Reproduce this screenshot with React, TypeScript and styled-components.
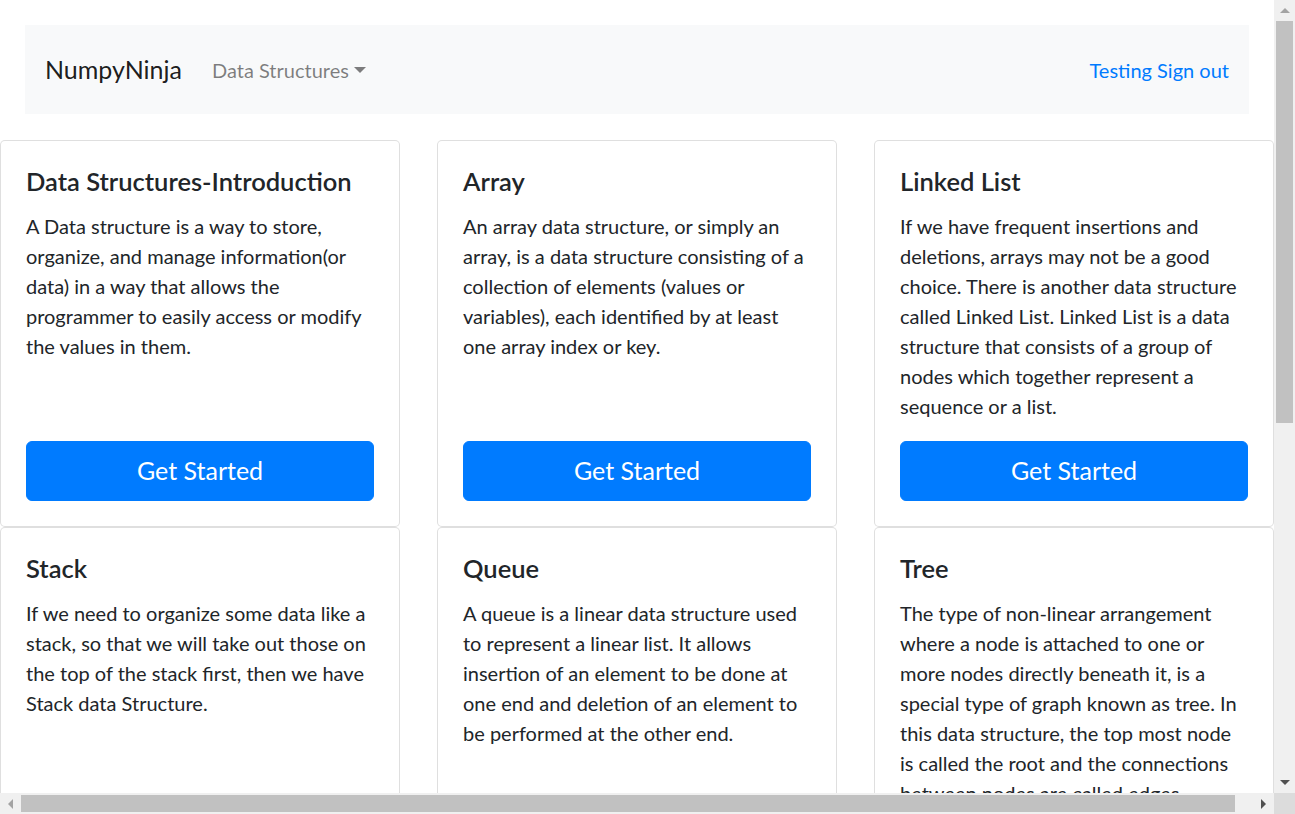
import React from 'react';
import styled, { createGlobalStyle } from 'styled-components';

const GlobalStyle = createGlobalStyle`
  html {
    font-size: 20px;
  }
  body {
    margin: 0;
    overflow: hidden;
    font-family: 'Segoe UI', Lato, 'Noto Sans', sans-serif;
    color: #212529;
    background: #fff;
    line-height: 1.5;
  }
`;

/* browser window: page area plus classic scroll bars */
const Frame = styled.div`
  display: grid;
  grid-template-columns: 1fr 21px;
  grid-template-rows: 1fr 21px;
  width: 100vw;
  height: 100vh;
`;

const Viewport = styled.div`
  overflow: hidden;
  min-width: 0;
  min-height: 0;
`;

const ScrollBar = styled.div<{ $vertical?: boolean }>`
  display: flex;
  flex-direction: ${(p) => (p.$vertical ? 'column' : 'row')};
  background: #f0f0f0;
`;

const ScrollTrack = styled.div<{ $vertical?: boolean }>`
  flex: 1;
  display: flex;
  flex-direction: ${(p) => (p.$vertical ? 'column' : 'row')};
  padding: ${(p) => (p.$vertical ? '0 2px' : '2px 0')};
`;

const Thumb = styled.div`
  background: #c1c1c1;
  flex: none;
`;

const ArrowButton = styled.div<{ $dir: 'up' | 'down' | 'left' | 'right'; $off?: boolean }>`
  width: 21px;
  height: 21px;
  flex: none;
  display: flex;
  align-items: center;
  justify-content: center;

  &::before {
    content: '';
    width: 0;
    height: 0;
    ${(p) => {
      const c = p.$off ? '#a3a3a3' : '#505050';
      switch (p.$dir) {
        case 'up':
          return `border-left: 5px solid transparent; border-right: 5px solid transparent; border-bottom: 5px solid ${c};`;
        case 'down':
          return `border-left: 5px solid transparent; border-right: 5px solid transparent; border-top: 5px solid ${c};`;
        case 'left':
          return `border-top: 5px solid transparent; border-bottom: 5px solid transparent; border-right: 5px solid ${c};`;
        default:
          return `border-top: 5px solid transparent; border-bottom: 5px solid transparent; border-left: 5px solid ${c};`;
      }
    }}
  }
`;

const Corner = styled.div`
  background: #dcdcdc;
`;

const Navbar = styled.nav`
  display: flex;
  align-items: center;
  height: 89px;
  box-sizing: border-box;
  margin: 25px 25px 26px;
  padding: 0 20px;
  background-color: #f8f9fa;
`;

const Brand = styled.a`
  font-size: 25px;
  color: rgba(0, 0, 0, 0.9);
  margin-right: 20px;
  text-decoration: none;
  line-height: 1.5;
`;

const NavLink = styled.a<{ $accent?: boolean }>`
  font-size: 20px;
  padding: 10px;
  text-decoration: none;
  color: ${(p) => (p.$accent ? '#007bff' : 'rgba(0, 0, 0, 0.5)')};
`;

const Dropdown = styled(NavLink)`
  &::after {
    content: '';
    display: inline-block;
    margin-left: 5px;
    vertical-align: 5px;
    border-top: 6px solid;
    border-right: 6px solid transparent;
    border-left: 6px solid transparent;
  }
`;

const NavRight = styled.div`
  margin-left: auto;
  margin-right: -10px;
`;

const CardGrid = styled.div`
  display: grid;
  grid-template-columns: repeat(3, 437px);
  width: 1311px;
`;

const Card = styled.div`
  width: 400px;
  box-sizing: border-box;
  display: flex;
  flex-direction: column;
  border: 1px solid rgba(0, 0, 0, 0.125);
  border-radius: 5px;
  background: #fff;
`;

const CardBody = styled.div`
  flex: 1;
  display: flex;
  flex-direction: column;
  padding: 25px;
`;

const CardTitle = styled.h5`
  margin: 0 0 15px;
  font-size: 25.5px;
  font-weight: 600;
  line-height: 30px;
`;

const CardText = styled.p`
  margin: 0 0 20px;
  font-size: 20px;
  line-height: 30px;
`;

const StartButton = styled.a`
  margin-top: auto;
  display: block;
  text-align: center;
  font-size: 25px;
  line-height: 1.5;
  padding: 10px 20px;
  border: 1px solid #007bff;
  border-radius: 6px;
  background-color: #007bff;
  color: #fff;
  text-decoration: none;
`;

const topics = [
  {
    title: 'Data Structures-Introduction',
    text: 'A Data structure is a way to store, organize, and manage information(or data) in a way that allows the programmer to easily access or modify the values in them.',
  },
  {
    title: 'Array',
    text: 'An array data structure, or simply an array, is a data structure consisting of a collection of elements (values or variables), each identified by at least one array index or key.',
  },
  {
    title: 'Linked List',
    text: 'If we have frequent insertions and deletions, arrays may not be a good choice. There is another data structure called Linked List. Linked List is a data structure that consists of a group of nodes which together represent a sequence or a list.',
  },
  {
    title: 'Stack',
    text: 'If we need to organize some data like a stack, so that we will take out those on the top of the stack first, then we have Stack data Structure.',
  },
  {
    title: 'Queue',
    text: 'A queue is a linear data structure used to represent a linear list. It allows insertion of an element to be done at one end and deletion of an element to be performed at the other end.',
  },
  {
    title: 'Tree',
    text: 'The type of non-linear arrangement where a node is attached to one or more nodes directly beneath it, is a special type of graph known as tree. In this data structure, the top most node is called the root and the connections between nodes are called edges.',
  },
  {
    title: 'Graph',
    text: 'A graph is a non-linear data structure consisting of nodes and edges. The nodes are sometimes also referred to as vertices and the edges are lines or arcs that connect any two nodes in the graph.',
  },
];

export default function App() {
  return (
    <Frame>
      <GlobalStyle />
      <Viewport>
        <Navbar>
          <Brand href="#">NumpyNinja</Brand>
          <Dropdown href="#">Data Structures</Dropdown>
          <NavRight>
            <NavLink href="#" $accent>
              Testing Sign out
            </NavLink>
          </NavRight>
        </Navbar>
        <CardGrid>
          {topics.map((t) => (
            <Card key={t.title}>
              <CardBody>
                <CardTitle>{t.title}</CardTitle>
                <CardText>{t.text}</CardText>
                <StartButton href="#">Get Started</StartButton>
              </CardBody>
            </Card>
          ))}
        </CardGrid>
      </Viewport>
      <ScrollBar $vertical>
        <ArrowButton $dir="up" $off />
        <ScrollTrack $vertical>
          <Thumb style={{ height: 402 }} />
        </ScrollTrack>
        <ArrowButton $dir="down" />
      </ScrollBar>
      <ScrollBar>
        <ArrowButton $dir="left" $off />
        <ScrollTrack>
          <Thumb style={{ width: 1214 }} />
        </ScrollTrack>
        <ArrowButton $dir="right" />
      </ScrollBar>
      <Corner />
    </Frame>
  );
}
